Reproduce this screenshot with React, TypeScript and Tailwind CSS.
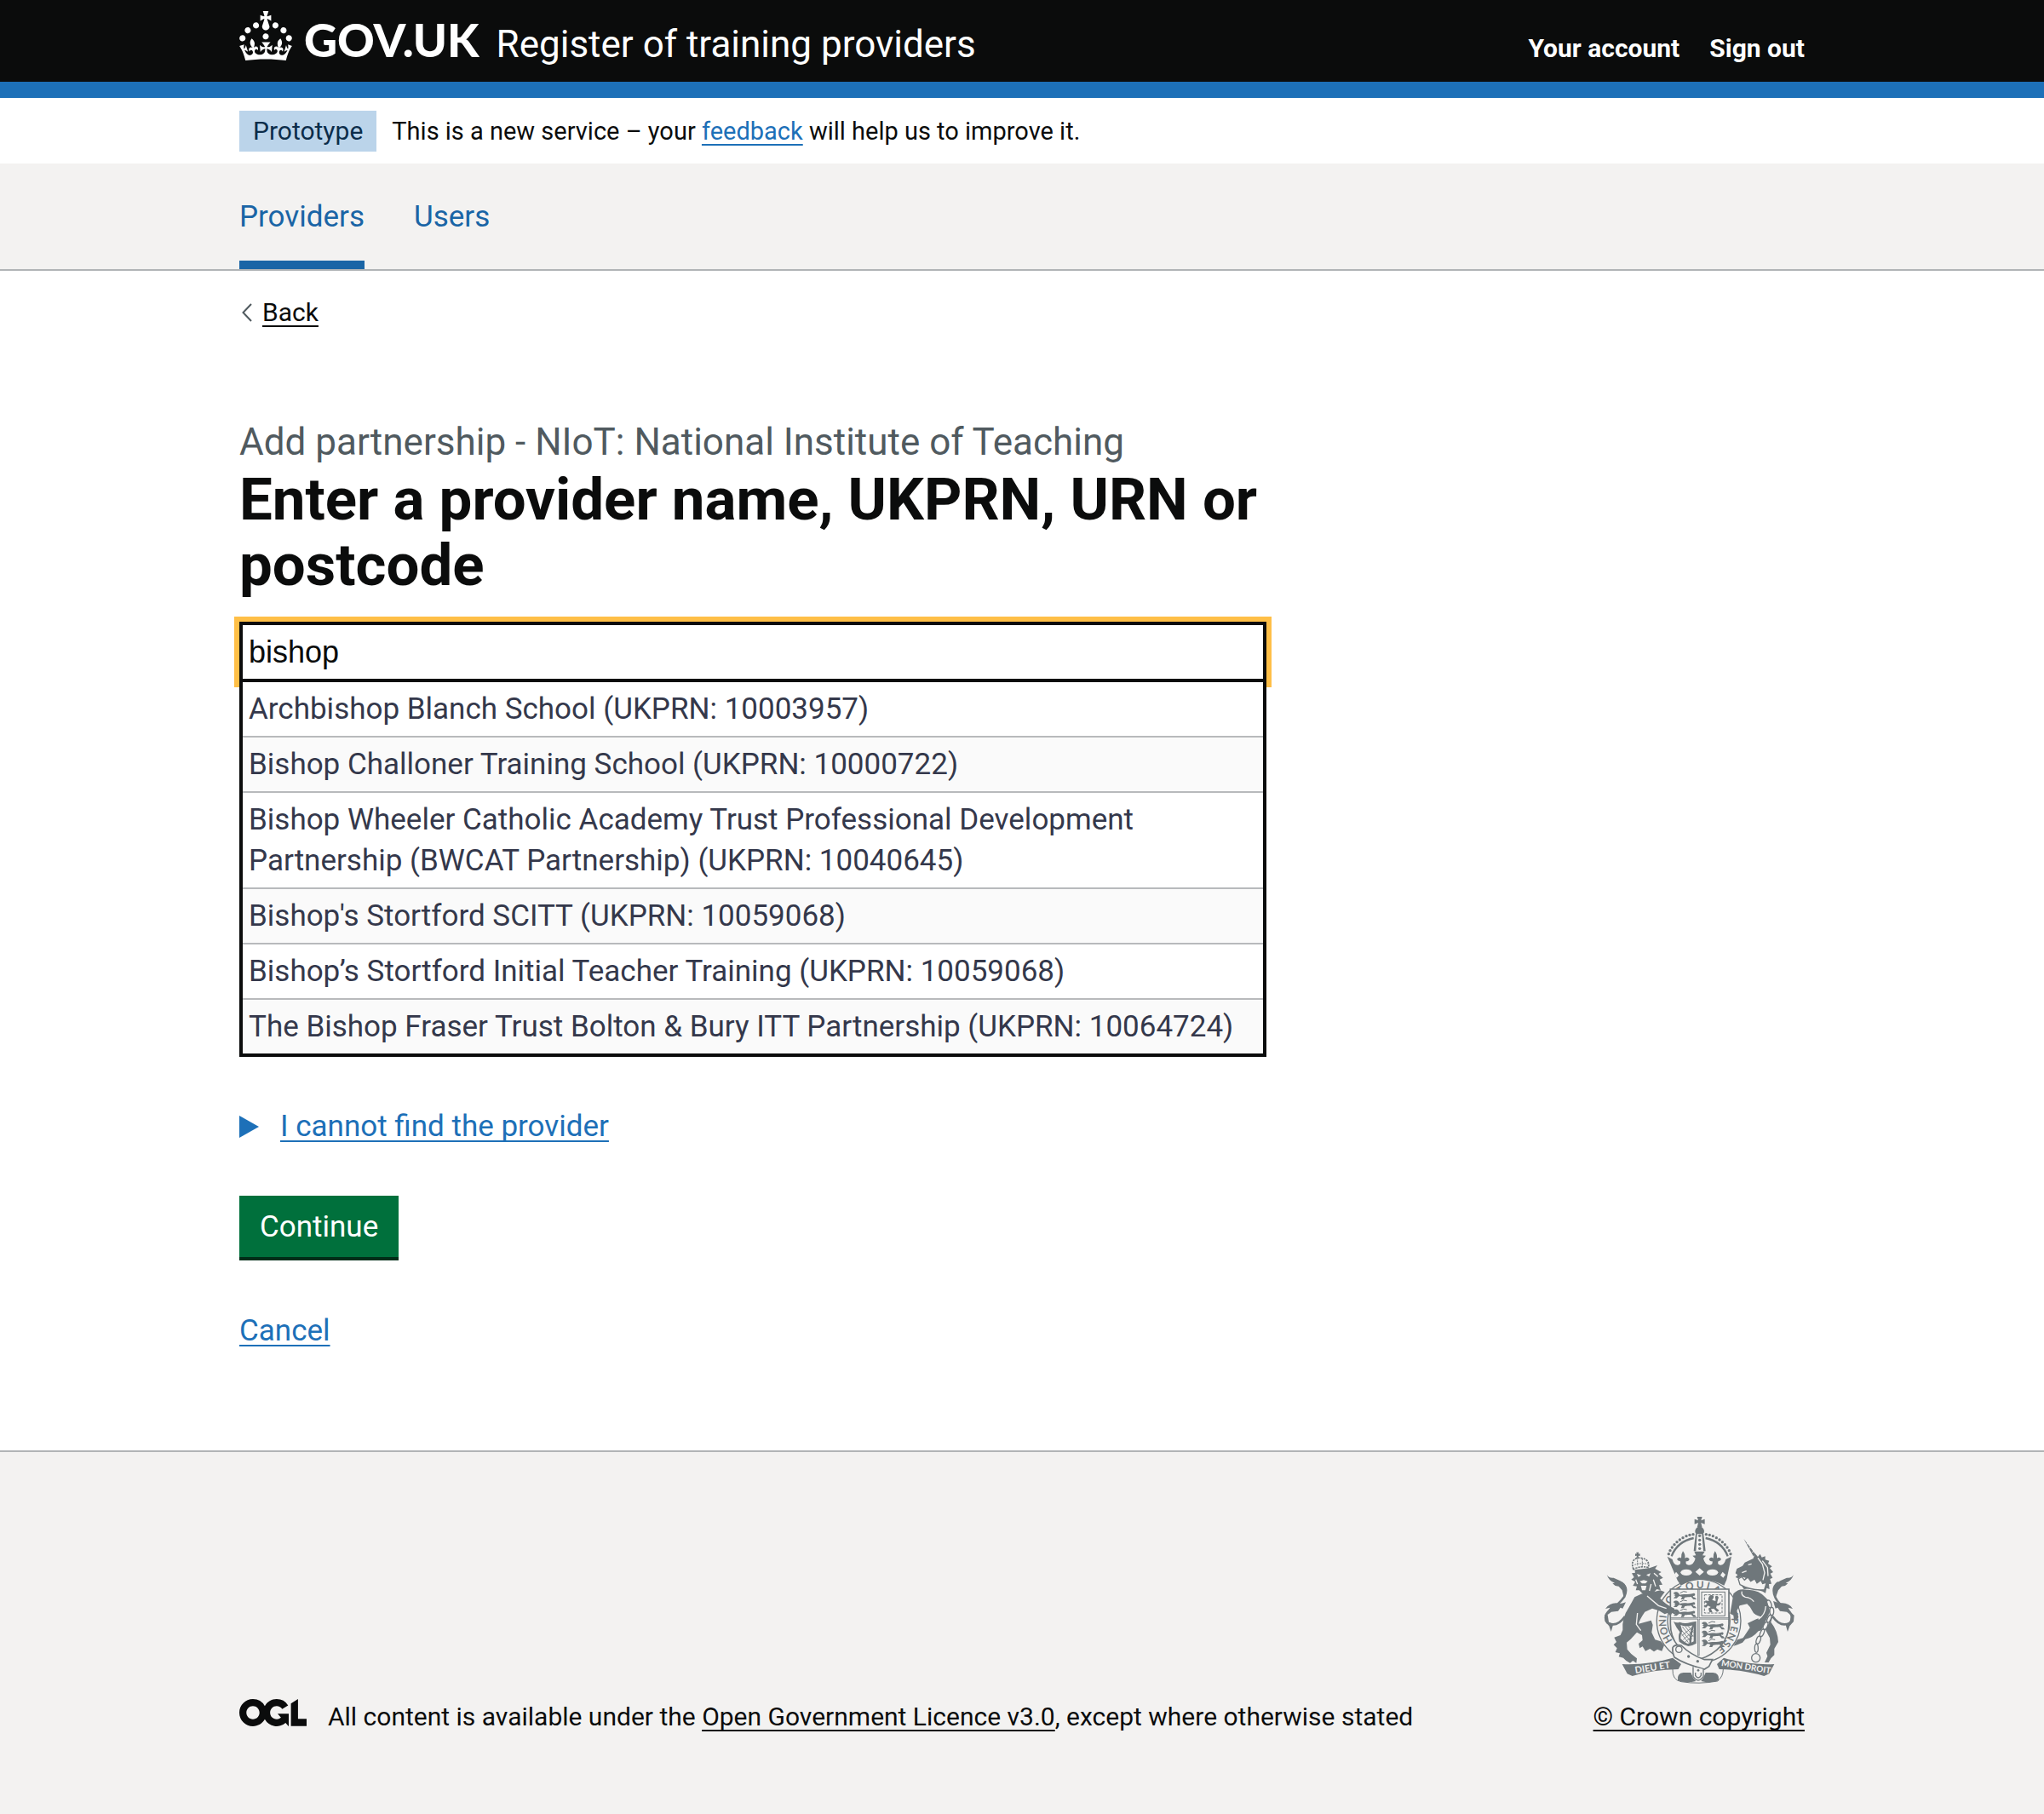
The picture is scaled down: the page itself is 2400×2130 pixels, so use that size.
import React, { useState } from "react";

const LINK =
  "underline decoration-2 underline-offset-[5px] [text-decoration-skip-ink:none]";

function CrownLogo() {
  return (
    <svg viewBox="0 0 32 30" className="h-[58px] w-[62px] shrink-0 self-start" fill="currentColor" aria-hidden="true">
      <path d="M22.6 10.4c-1 .4-2-.1-2.4-1-.4-.9.1-2 1-2.4.9-.4 2 .1 2.4 1s-.1 2-1 2.4m-5.9 6.7c-.9.4-2-.1-2.4-1-.4-.9.1-2 1-2.4.9-.4 2 .1 2.4 1s-.1 2-1 2.4m10.8-3.7c-1 .4-2-.1-2.4-1-.4-.9.1-2 1-2.4.9-.4 2 .1 2.4 1s0 2-1 2.4m3.3 4.8c-1 .4-2-.1-2.4-1-.4-.9.1-2 1-2.4.9-.4 2 .1 2.4 1s-.1 2-1 2.4M17 4.7l2.3 1.2V2.5l-2.3.7-.2-.2.9-3h-3.4l.9 3-.2.2c-.1.1-2.3-.7-2.3-.7v3.4L15 4.7c.1.1.1.2.2.2l-1.3 4c-.1.2-.1.4-.1.6 0 1.1.8 2 1.9 2.2h.7c1-.2 1.9-1.1 1.9-2.1 0-.2 0-.4-.1-.6l-1.3-4c-.1-.2 0-.2.1-.3m-7.6 5.7c.9.4 2-.1 2.4-1 .4-.9-.1-2-1-2.4-.9-.4-2 .1-2.4 1s0 2 1 2.4m-5 3c.9.4 2-.1 2.4-1 .4-.9-.1-2-1-2.4-.9-.4-2 .1-2.4 1s.1 2 1 2.4m-3.2 4.8c.9.4 2-.1 2.4-1 .4-.9-.1-2-1-2.4-.9-.4-2 .1-2.4 1s0 2 1 2.4m14.8 11c4.4 0 8.6.3 12.3.8 1.1-4.5 2.4-7 3.7-8.8l-2.5-.9c.2 1.3.3 1.9 0 2.7-.4-.4-.8-1.1-1.1-2.3l-1.2 4c.7-.5 1.3-.8 2-.9-1.1 2.5-2.6 3.1-3.5 3-1.1-.2-1.7-1.2-1.5-2.1.3-1.2 1.5-1.5 2.1-.1 1.1-2.3-.8-3-2-2.3 1.9-1.9 2.1-3.5.6-5.6-2.1 1.6-2.1 3.2-1.2 5.5-1.2-1.4-3.2-.6-2.5 1.6.9-1.4 2.1-.5 1.9.8-.2 1.1-1.7 2.1-3.5 1.9-2.7-.2-2.9-2.1-2.9-3.6.7-.1 1.9.5 2.9 1.9l.4-4.3c-1.1 1.1-2.1 1.4-3.2 1.4.4-1.2 2.1-3 2.1-3h-5.4s1.7 1.9 2.1 3c-1.1 0-2.1-.2-3.2-1.4l.4 4.3c1-1.4 2.2-2 2.9-1.9-.1 1.5-.2 3.4-2.9 3.6-1.9.2-3.4-.8-3.5-1.9-.2-1.3 1-2.2 1.9-.8.7-2.3-1.2-3-2.5-1.6.9-2.2.9-3.9-1.2-5.5-1.5 2-1.3 3.7.6 5.6-1.2-.7-3.1 0-2 2.3.6-1.4 1.8-1.1 2.1.1.2.9-.3 1.9-1.5 2.1-.9.2-2.4-.5-3.5-3 .6 0 1.2.3 2 .9l-1.2-4c-.3 1.1-.7 1.9-1.1 2.3-.3-.8-.2-1.4 0-2.7l-2.9.9C1.3 23 2.6 25.5 3.7 30c3.7-.5 7.9-.8 12.3-.8" />
    </svg>
  );
}

function OglLogo() {
  return (
    <svg viewBox="0 0 483.2 195.7" className="mb-2 h-8 w-[79px] shrink-0" fill="currentColor" role="img" aria-label="Open Government Licence">
      <path d="M421.5 142.8V.1l-50.7 32.3v161.1h112.4v-50.7zm-122.3-9.6A47.12 47.12 0 0 1 221 97.8c0-26 21.1-47.1 47.1-47.1 16.7 0 31.4 8.7 39.7 21.8l42.7-27.2A97.63 97.63 0 0 0 268.1 0c-36.5 0-68.3 20.1-85.1 49.7A98 98 0 0 0 97.8 0C43.9 0 0 43.9 0 97.8s43.9 97.8 97.8 97.8c36.5 0 68.3-20.1 85.1-49.7a97.76 97.76 0 0 0 149.6 25.4l19.4 22.2h3v-87.8h-80l24.3 27.5zM97.8 145c-26 0-47.1-21.1-47.1-47.1s21.1-47.1 47.1-47.1 47.1 21.1 47.1 47.1S123.8 145 97.8 145" />
    </svg>
  );
}

/* Garter letters and the angle at which each one stands on the ring */
const MOTTO: [string, number][] = [
  ["H", 240], ["O", 254], ["N", 267], ["I", 277], ["S", 292], ["O", 306], ["I", 318],
  ["T", 329], ["Q", 345], ["U", 2], ["I", 15], ["A", 30], ["L", 46], ["Y", 76],
  ["P", 90], ["E", 103], ["N", 116], ["S", 129], ["E", 142],
];

/* Three lions passant, used in two quarters of the shield */
function Lions() {
  return (
    <g>
      {[0, 31, 62].map((y) => (
        <g key={y} transform={`translate(0 ${y})`}>
          <path d="M2 5c4-7 14-7 19-1l4 6c14-5 29 1 44-4 7-4 12 0 9 6-3 5-8 1-5-2-3 4-2 9 5 9l6 7h-11l-8-9c-9 1-15 1-22 2l-4 7h-10l4-9-10-3-9 8h-11l7-8-6-3 6-2z" />
          <path d="M26 4q12-10 24-4" fill="none" stroke="#6f777b" strokeWidth="3" />
        </g>
      ))}
    </g>
  );
}

const ARCH_PEARLS: [number, number][] = [
  [298, 194], [303, 182], [310, 171], [318, 161], [327, 152], [337, 144], [348, 137], [360, 131], [372, 127], [384, 125],
];

function CoatOfArms() {
  return (
    <svg viewBox="69 60 672 594" className="h-[198px] w-56" fill="#6f777b" role="img" aria-label="Royal coat of arms">
      {/* garter */}
      <ellipse cx="404" cy="430" rx="148" ry="147" fill="#f3f2f1" stroke="#6f777b" strokeWidth="4" />
      <ellipse cx="404" cy="430" rx="110" ry="110" fill="none" stroke="#6f777b" strokeWidth="4" />
      {MOTTO.map(([c, a], i) => (
        <text key={i} x="404" y="315" fontSize="35" fontWeight="700" fontFamily="Lato, sans-serif" textAnchor="middle" transform={`rotate(${a} 404 430)`}>
          {c}
        </text>
      ))}
      {/* shield */}
      <path d="M304 318H510V440C510 500 470 545 405 566C340 545 304 500 304 440Z" fill="#f3f2f1" stroke="#6f777b" strokeWidth="5" />
      <path d="M403 318V552M304 421H510" stroke="#6f777b" strokeWidth="7" fill="none" />
      <path d="M403 320V550M306 421H508" stroke="#f3f2f1" strokeWidth="2" fill="none" />
      <g transform="translate(312 328)"><Lions /></g>
      <g transform="translate(412 434)"><Lions /></g>
      <rect x="414" y="328" width="82" height="84" fill="none" stroke="#6f777b" strokeWidth="3" />
      <rect x="424" y="338" width="62" height="64" fill="none" stroke="#6f777b" strokeWidth="3" strokeDasharray="9 4" />
      <path d="M444 340c9-4 15 2 12 8l-5 8 12 4c2-9-4-13 1-18 8-2 12 5 8 10l-4 16c7 2 12-2 12-7 5 10-4 16-13 15l-2 8 11 9-8 5-11-11-10 1 5 11-10 1-4-14 8-5-10-5-7 8-5-7 10-8-9-5 3-6 12 2c-5-8-1-15 4-20z" />
      {/* harp quarter */}
      <path d="M315 432q10 6 22 2 18 8 38 1l20-4v78q-15 9-28 10-20-6-32-16-5-20 2-34-12-14-22-37z" />
      <path d="M340 444q20 9 46 0v58q-12 8-22 8-14-7-24-18 0-18 6-25z" fill="#f3f2f1" />
      <path d="M346 450l34 44M356 449l29 36M343 462l32 40M342 474l25 32M366 448l20 24M384 450l-40 32M386 464l-37 32M386 480l-30 24" stroke="#6f777b" strokeWidth="2.5" fill="none" />
      <path d="M388 436q-14 35-14 76" stroke="#6f777b" strokeWidth="7" fill="none" />
      {/* buckle and strap */}
      <path d="M312 524q6-12 30-8 34 34 82 50h28l-12 24-16 10q-70-18-106-42-8-18-6-34z" fill="#f3f2f1" stroke="#6f777b" strokeWidth="5" />
      <circle cx="334" cy="530" r="11" fill="none" stroke="#6f777b" strokeWidth="4" />
      <circle cx="368" cy="555" r="5" />
      <circle cx="400" cy="572" r="5" />
      <path d="M384 592v34q18 26 36 0v-26" fill="#f3f2f1" stroke="#6f777b" strokeWidth="4" />
      <path d="M392 612v10q10 16 20 0v-10" fill="none" stroke="#6f777b" strokeWidth="4" />
      <circle cx="402" cy="604" r="4" />
      {/* imperial crown */}
      <path d="M398 63h18l-4 13 13-5v18l-13-5 4 17h-18l4-17-13 5V71l13 5z" />
      <circle cx="407" cy="114" r="16" />
      <rect x="389" y="120" width="35" height="64" fill="#f3f2f1" />
      <path d="M386 184q4-40 8-66h26q4 30 8 66h-8l-5-60h-17l-4 60z" />
      {ARCH_PEARLS.map(([x, y]) => (
        <g key={x}>
          <circle cx={x} cy={y} r="5" />
          <circle cx={814 - x} cy={y} r="5" />
        </g>
      ))}
      {[130, 145, 160, 175].map((y) => (
        <circle key={y} cx="407" cy={y} r="5" />
      ))}
      <path d="M308 202q20-52 78-64M506 202q-20-52-78-64" fill="none" stroke="#6f777b" strokeWidth="7" />
      <path d="M293 203l18 10q5 22 20 20 12-2 7-14-8 0-11-7 9-9 15-3-2-12 6-25 10 12 7 25 10-6 16 3-2 8-12 8-3 13 10 13 17 0 23-23l-10-10 12-1-6-14h37l-8 14 12 1-9 10q6 23 22 23 12 0 10-13-10 0-12-8 6-9 15-3-2-12 6-25 9 12 7 25 9-6 15 3-2 7-10 7-5 12 6 14 14 2 20-20l20-10-17 82-9 20q-78-42-152 0l-12-18z" />
      <g fill="#f3f2f1">
        <ellipse cx="360" cy="259" rx="20" ry="11" />
        <ellipse cx="452" cy="259" rx="20" ry="11" />
        <path d="M407 244l15 13-15 13-15-13zM324 257l10 12-8 9-8-12zM488 257l10 10-8 11-10-9z" />
      </g>
      {/* lion supporter */}
      <path d="M184 188h9l-2 6 6-1v8l-6-1 1 8h-8l2-8-6 1v-8l5 1z" />
      <path d="M174 248q-12-32 14-40 36-2 40 24l-2 10q-26-8-52 6z" fill="#f3f2f1" stroke="#6f777b" strokeWidth="5" strokeDasharray="7 3" />
      <path d="M188 208v28M205 211v27M178 232q23-8 48-2" stroke="#6f777b" strokeWidth="3" fill="none" strokeDasharray="6 3" />
      <path d="M178 250L230 244L258 234L250 246L272 258L262 264L278 278L266 284L276 302L264 304L270 322L256 318L240 336L222 340L208 336L194 322L182 322L186 308L172 306L180 292L166 284L176 276L168 262L180 260Z" />
      <path d="M214 336L268 322L284 328L268 350Q284 370 318 386L322 408L310 402L304 412L294 402L284 406L264 394L240 386L214 398Q196 424 192 440L236 428L242 444L238 470L250 496L270 502L282 516L274 536L258 530L246 538L232 528L216 536L206 520L196 526L192 510L206 498L204 480L186 470L164 494L150 506L152 530L166 546L186 562L184 578L172 570L162 578L148 570L138 560L122 556L126 544L110 540L116 526L104 514L114 504L106 488L128 480L136 462Q132 420 158 382L178 346L204 334Z" />
      <g fill="#f3f2f1">
        <path d="M186 264l15 5-10 6zM234 262l-15 6 10 6zM196 290l14-4 14 4-8 8h-12zM200 306h20l-4 16h-12z" />
      </g>
      <path d="M244 284l8 24M246 262l14 12M182 284l6 16M236 300l-6 24M222 342l40 34 28 10M188 402l-4 40 16 22" stroke="#f3f2f1" strokeWidth="4" fill="none" />
      <path d="M144 414q-30 42-62 22-16-22 8-44 34-22 52-48 16-36-16-50" fill="none" stroke="#6f777b" strokeWidth="8" />
      <path d="M80 266q6 14 24 12l22 10q24 10 24 34l-10 26-6-26-12-14-12-2-10-8 8-2q-22-8-28-30zM147 364q-20 8-34 3-24 0-38 20l16-4-15 30 20-15 24-3 8-12 8 3zM72 410l10-8 5 32 16 6-8 28-7-20-14-16z" />
      {/* unicorn supporter */}
      <path d="M562 140l42 56-8 6z" />
      <path d="M572 160l9-6M582 174l10-7M592 188l10-7" stroke="#f3f2f1" strokeWidth="3" />
      <path d="M538 246l20-10 8-12 30-14 6-18 10 12 8-10 6 12 12-4v12l14 4-4 10 14 10-8 6 12 14-10 5 8 15-9 4 5 17-9 1 2 18-10-4-4 18-10-6q-42-14-66-8l-12-18 18-22-16-4-10 6-10-4 8-8-8-6z" />
      <path d="M578 232l12-3M612 208l16 22 8 30-6 26M628 218l18 24 2 30M556 260l16-6" stroke="#f3f2f1" strokeWidth="4" fill="none" />
      <path d="M543 282l12-8 10 12 12-10 10 14 14-8 8 14 14-10 6 12 14-4-8 26q-46 4-86-18z" fill="#f3f2f1" stroke="#6f777b" strokeWidth="4" />
      <path d="M526 334q18-20 46-14 44-2 70 30 30 26 24 60l-8 24q24 30 26 70l-14 24 0 22-12 12-8 14-14 0 10-22-4-12 14-28-2-24-16-30-24 6q-20 24-46 28l-10 12-18 8-14 4 14-22 20-6 24-36-8-16 30-14 20-8q-28-6-34-22-8-16-18-24l-26 6-10 18 6 22-6 14-10-4-2-16-12-6 6-32z" />
      <path d="M556 326q-4 14 12 20 20 2 30 16M640 378q-2 30-26 46" fill="none" stroke="#f3f2f1" strokeWidth="4" />
      <path d="M664 414q30 42 62 22 16-22-8-44-34-22-44-44-16-36 10-54" fill="none" stroke="#6f777b" strokeWidth="8" />
      <path d="M738 266q-6 14-24 12l-22 10q-24 10-24 34l8 22 8-22 12-14 12-2 10-8-8-2q22-8 28-30zM666 360q20 8 32 7 24 0 37 20l-16-4 15 30-20-15-24-3-8-12-8 3zM740 410l-10-8-5 32-16 6 8 28 7-20 14-16z" />
      <path d="M650 358l12 38-22 50-26 50-8 50" fill="none" stroke="#f3f2f1" strokeWidth="13" />
      <g fill="none" stroke="#6f777b" strokeWidth="4">
        <ellipse cx="652" cy="370" rx="7" ry="14" transform="rotate(-20 652 370)" />
        <ellipse cx="661" cy="396" rx="7" ry="14" />
        <ellipse cx="652" cy="422" rx="6" ry="14" transform="rotate(24 652 422)" />
        <ellipse cx="639" cy="447" rx="7" ry="14" transform="rotate(24 639 447)" />
        <ellipse cx="627" cy="472" rx="6" ry="14" transform="rotate(24 627 472)" />
        <ellipse cx="614" cy="497" rx="7" ry="14" transform="rotate(20 614 497)" />
        <ellipse cx="607" cy="526" rx="6" ry="15" />
        <circle cx="605" cy="560" r="15" />
      </g>
      {/* motto scroll */}
      <path d="M134 582q90 4 178-22l30 22-10 18q-90 2-162 24l-18-8z" />
      <path d="M670 582q-90 4-178-22l-24 22 8 18q88 2 158 24l18-8z" />
      <path d="M312 600q-2 38 30 44 62 10 128-2 20-16 20-42" fill="none" stroke="#6f777b" strokeWidth="3" />
      <path d="M330 640q-4-26 20-28h26l8 18 10 12q-34 8-64-2zM474 640q4-26-20-28h-26l-8 18-8 12q34 8 62-2z" />
      <g fill="#f3f2f1" fontFamily="Lato, sans-serif" fontWeight="700" fontSize="33">
        <text x="181" y="615" transform="rotate(-9 181 615)">DIEU ET</text>
        <text x="482" y="588" fontSize="30" transform="rotate(9 482 588)">MON DROIT</text>
      </g>
    </svg>
  );
}

const PROVIDERS = [
  "Archbishop Blanch School (UKPRN: 10003957)",
  "Bishop Challoner Training School (UKPRN: 10000722)",
  "Bishop Wheeler Catholic Academy Trust Professional Development Partnership (BWCAT Partnership) (UKPRN: 10040645)",
  "Bishop's Stortford SCITT (UKPRN: 10059068)",
  "Bishop’s Stortford Initial Teacher Training (UKPRN: 10059068)",
  "The Bishop Fraser Trust Bolton & Bury ITT Partnership (UKPRN: 10064724)",
];

const CONTAINER = "mx-auto w-full max-w-[1838px]";

export default function App() {
  const [query, setQuery] = useState("bishop");
  return (
    <div className="flex min-h-screen flex-col bg-white font-['Roboto',sans-serif] text-[#0b0c0c]">
      <header className="border-b-[19px] border-[#1d70b8] bg-[#0b0c0c] text-white">
        <div className={`${CONTAINER} flex h-24 items-baseline justify-between pt-[13px]`}>
          <div className="flex items-baseline">
            <a href="#" className="flex items-baseline gap-[14px]" aria-label="GOV.UK">
              <CrownLogo />
              <span className="font-['Lato',sans-serif] text-[54px] leading-[68px] font-black">GOV.UK</span>
            </a>
            <a href="#" className="ml-5 text-[44px] leading-[68px]">Register of training providers</a>
          </div>
          <nav aria-label="Account" className="flex gap-[35px] text-[30px] leading-[38px] font-bold">
            <a href="#">Your account</a>
            <a href="#">Sign out</a>
          </nav>
        </div>
      </header>

      <div className={`${CONTAINER} flex h-[77px] items-center gap-[18px]`}>
        <strong className="bg-[#bbd4ea] px-4 text-[30px] leading-[48px] font-normal text-[#0c2d4a]">Prototype</strong>
        <p className="text-[29px] leading-[48px]">
          This is a new service – your{" "}
          <a href="#" className={`${LINK} text-[#1d70b8]`}>feedback</a> will help us to improve it.
        </p>
      </div>

      <nav aria-label="Primary" className="border-b-2 border-[#b1b4b6] bg-[#f3f2f1] text-[35px] leading-[48px] text-[#1a65a6]">
        <ul className={`${CONTAINER} flex gap-[58px]`}>
          <li className="border-b-10 border-[#1a65a6] pt-[39px] pb-[27px]">
            <a href="#" aria-current="page">Providers</a>
          </li>
          <li className="pt-[39px]">
            <a href="#">Users</a>
          </li>
        </ul>
      </nav>

      <div className={`${CONTAINER} flex-1 pt-[30px] pb-[116px]`}>
        <a href="#" className="inline-flex items-center gap-3 pl-[3px] align-top text-[30px] leading-[38px]">
          <svg viewBox="0 0 12 22" className="h-[22px] w-3" fill="none" stroke="#505a5f" strokeWidth="2" aria-hidden="true">
            <path d="M11 1L1.500 11L11 21" />
          </svg>
          <span className={LINK}>Back</span>
        </a>

        <main className="mt-[104px] grid grid-cols-3 gap-x-[57px]">
          <form className="col-span-2" onSubmit={(e) => e.preventDefault()}>
            <h1>
              <label htmlFor="provider" className="block text-[69px] leading-[77px] font-bold">
                <span className="block text-[44px] leading-[58px] font-normal text-[#505a5f]">
                  Add partnership - NIoT: National Institute of Teaching
                </span>
                Enter a provider name, UKPRN, URN or postcode
              </label>
            </h1>

            <div className="mt-7">
              <input
                id="provider"
                type="text"
                role="combobox"
                aria-expanded="true"
                aria-controls="provider-options"
                value={query}
                onChange={(e) => setQuery(e.target.value)}
                className="block h-[71px] w-full border-4 border-[#0b0c0c] bg-white px-[7px] font-['Liberation_Sans',sans-serif] text-[36px] text-[#0b0c0c] shadow-[0_0_0_6px_#ffbf47] outline-none"
              />
              <ul
                id="provider-options"
                role="listbox"
                aria-label="Providers"
                className="relative border-4 border-t-0 border-[#0b0c0c] bg-white text-[35px] leading-[48px] text-[#34384b]"
              >
                {PROVIDERS.map((name) => (
                  <li
                    key={name}
                    role="option"
                    aria-selected="false"
                    className="border-b-2 border-[#b8babc] px-[7px] pt-2 pb-[7px] last:border-b-0 even:bg-[#fafafa]"
                  >
                    {name}
                  </li>
                ))}
              </ul>
            </div>

            <details className="mt-[58px] text-[35px] leading-[48px]">
              <summary className="flex w-fit cursor-pointer list-none items-center gap-[25px] text-[#1d70b8]">
                <svg viewBox="0 0 23 26" className="h-[26px] w-[23px]" fill="currentColor" aria-hidden="true">
                  <path d="M0 0L23 13L0 26Z" />
                </svg>
                <span className={LINK}>I cannot find the provider</span>
              </summary>
            </details>

            <button
              type="submit"
              className="mt-[57px] block bg-[#00703c] px-6 pt-[13px] pb-[11px] text-[35px] leading-[48px] text-white shadow-[0_4px_0_#002d18]"
            >
              Continue
            </button>

            <p className="mt-[63px] text-[35px] leading-[48px]">
              <a href="#" className={`${LINK} text-[#1d70b8]`}>Cancel</a>
            </p>
          </form>
        </main>
      </div>

      <footer className="border-t-2 border-[#b1b4b6] bg-[#f3f2f1] pt-[75px] pb-[95px] text-[30px] leading-[38px]">
        <div className={`${CONTAINER} flex items-end justify-between`}>
          <div className="flex items-end gap-[25px]">
            <OglLogo />
            <p>
              All content is available under the{" "}
              <a href="#" className={LINK}>Open Government Licence v3.0</a>, except where otherwise stated
            </p>
          </div>
          <a href="#" className="flex flex-col items-center gap-[19px]">
            <CoatOfArms />
            <span className={LINK}>© Crown copyright</span>
          </a>
        </div>
      </footer>
    </div>
  );
}
